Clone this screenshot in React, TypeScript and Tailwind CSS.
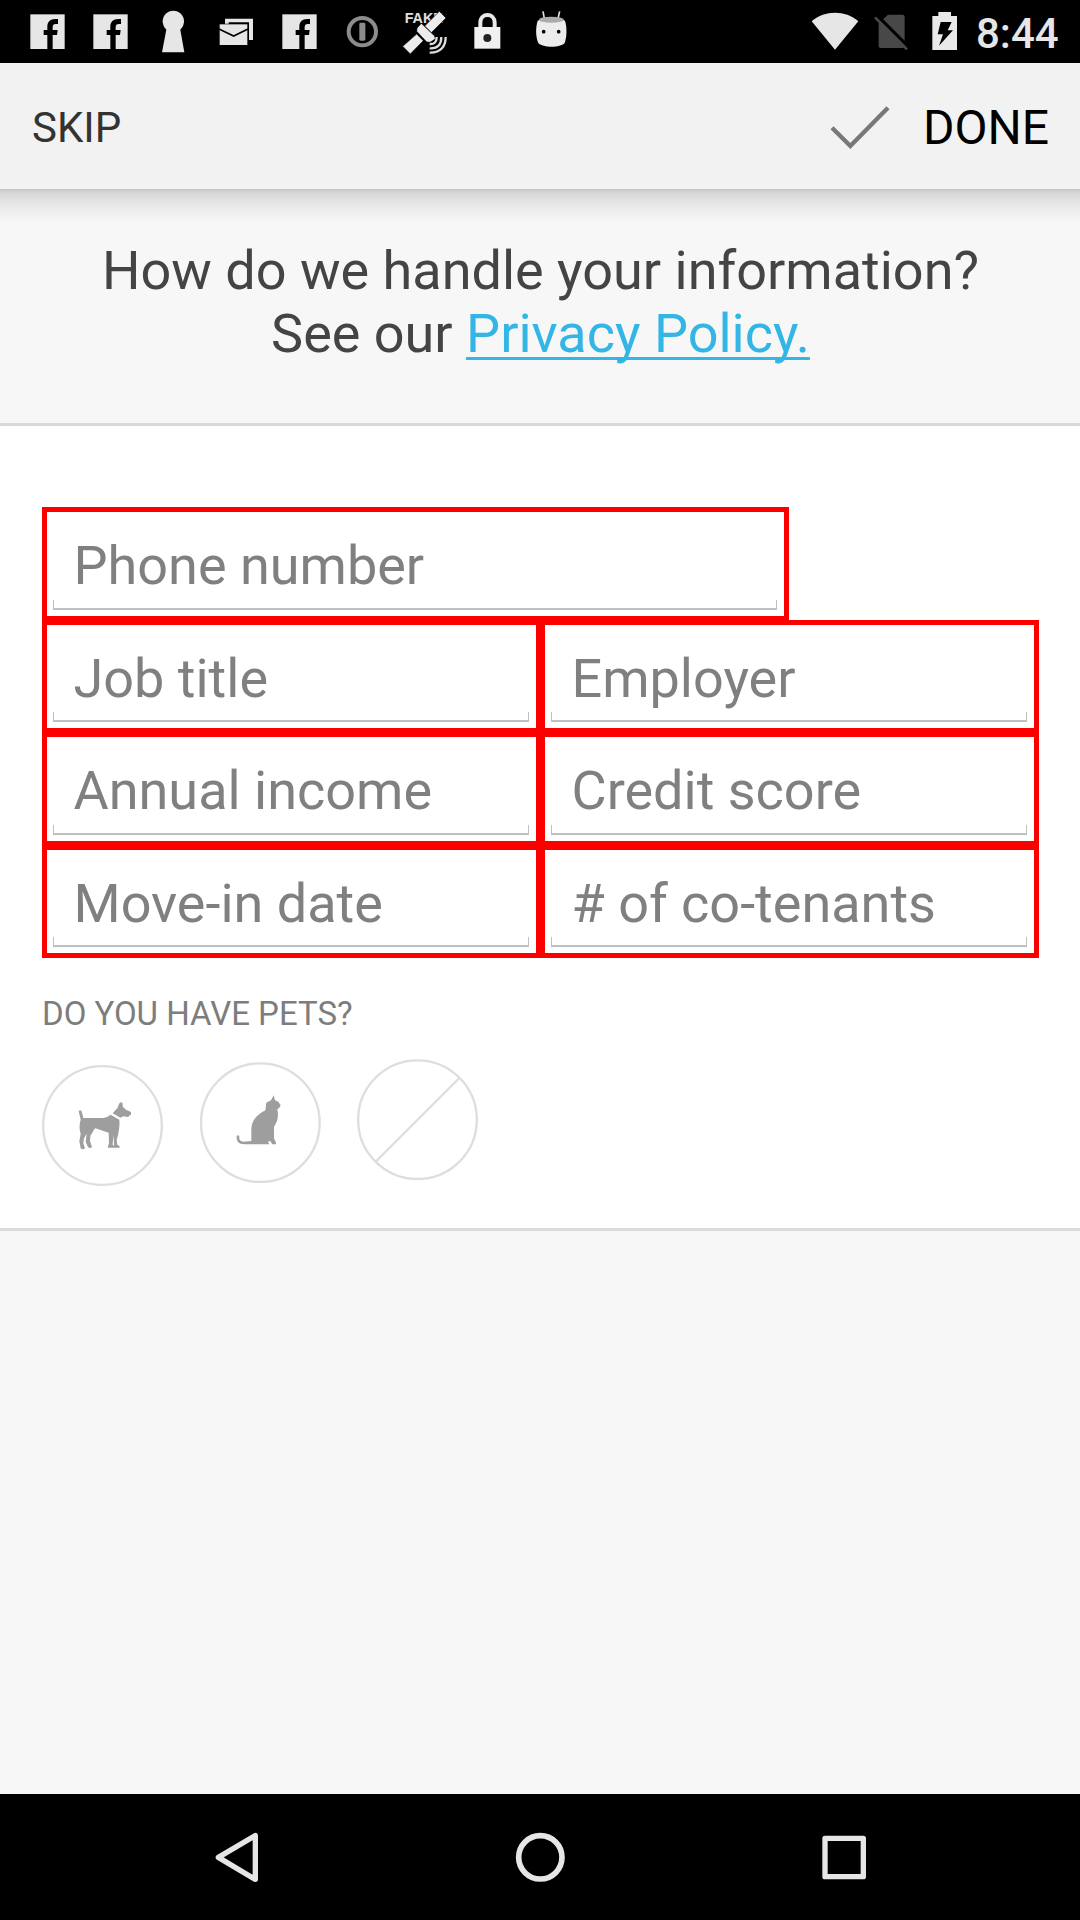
import React from "react";

function FacebookIcon() {
  return (
    <svg className="h-[63px] w-[63px]" viewBox="48 0 189 189">
      <rect x="91" y="43" width="103" height="104" fill="#e6e6e6" />
      <path
        d="M174 57H166C150 57 142 66 142 80V90H131V105H142V147H158V105H171L173 90H158V82C158 75 161 72 167 72H174Z"
        fill="#000"
      />
    </svg>
  );
}

function KeyholeIcon() {
  return (
    <svg className="h-[63px] w-[63px]" viewBox="426 0 189 189">
      <circle cx="520" cy="64" r="32" fill="#e6e6e6" />
      <path d="M500 84H540L553 157H486Z" fill="#e6e6e6" />
    </svg>
  );
}

function MailIcon() {
  return (
    <svg className="h-[63px] w-[63px]" viewBox="615 0 189 189">
      <path d="M675 56H759V120H747V67H686V71H675Z" fill="#e6e6e6" />
      <rect x="659" y="73" width="83" height="62" fill="#e6e6e6" />
      <path d="M657 87L701 108L744 87" fill="none" stroke="#000" strokeWidth="5" />
    </svg>
  );
}

function InfoIcon() {
  return (
    <svg className="h-[63px] w-[63px]" viewBox="33 0 189 189">
      <circle cx="127" cy="95" r="41" fill="none" stroke="#8c8c8c" strokeWidth="12" />
      <rect x="118" y="68" width="18" height="54" rx="4" fill="#8c8c8c" />
    </svg>
  );
}

function SatelliteIcon() {
  return (
    <svg className="h-[63px] w-[63px]" viewBox="222 0 189 189">
      <text x="254" y="69" fill="#e0e0e0" fontFamily="Liberation Sans" fontWeight="700" fontSize="43">
        FAKE
      </text>
      <g fill="#ececec" stroke="#000" strokeWidth="2">
        <path d="M358 34L378 54L334 98L314 78Z" />
        <path d="M290 102L310 122L271 162L248 139Z" />
        <path d="M304 70L344 108L346 117L330 127L320 126L290 94L291 84Z" />
      </g>
      <g fill="none" stroke="#dcdcdc" strokeWidth="7">
        <path d="M329 132C343 133 350 126 350 111" />
        <path d="M329 145C354 147 364 132 364 111" />
        <path d="M329 158C363 159 377 138 377 111" />
      </g>
    </svg>
  );
}

function LockIcon() {
  return (
    <svg className="h-[63px] w-[63px]" viewBox="411 0 189 189">
      <path d="M481 84V68C481 37 524 37 524 68V84" fill="none" stroke="#e9e9e9" strokeWidth="12" />
      <rect x="463" y="81" width="78" height="65" fill="#f0f0f0" />
      <circle cx="502" cy="114" r="12" fill="#222" />
    </svg>
  );
}

function RobotIcon() {
  return (
    <svg className="h-[63px] w-[63px]" viewBox="600 0 189 189">
      <path d="M669 34L673 56M719 34L714 56" stroke="#ddd" strokeWidth="5" />
      <path d="M653 62C670 52 718 52 735 62C741 82 741 108 734 129C720 144 670 144 655 129C646 108 647 82 653 62Z" fill="#ececec" />
      <ellipse cx="694" cy="59" rx="37" ry="9" fill="#ababab" />
      <circle cx="671" cy="95" r="5.5" fill="#000" />
      <circle cx="716" cy="95" r="5.5" fill="#000" />
    </svg>
  );
}

function WifiIcon() {
  return (
    <svg className="h-[63px] w-[56px]" viewBox="84 0 168 189">
      <path d="M165 149L95 64C135 30 195 30 235 64Z" fill="#e6e6e6" />
    </svg>
  );
}

function NoSimIcon() {
  return (
    <svg className="h-[63px] w-[55px]" viewBox="252 0 165 189">
      <path d="M324 44H367Q374 44 374 51V137Q374 144 367 144H304Q296 144 296 137V70Z" fill="#484848" />
      <path d="M291 46L387 142" stroke="#000" strokeWidth="10" />
      <path d="M285 52L381 148" stroke="#484848" strokeWidth="8" />
    </svg>
  );
}

function BatteryIcon() {
  return (
    <svg className="h-[63px] w-[51px]" viewBox="417 0 153 189">
      <path d="M475 36H513V48H531V150H457V48H475Z" fill="#e9e9e9" />
      <path d="M482 66H515L503 91H519L477 137L489 103H473Z" fill="#000" />
    </svg>
  );
}

function DogIcon() {
  return (
    <svg className="h-[121px] w-[121px]" viewBox="66 74 363 363">
      <circle cx="247.5" cy="255.5" r="178" fill="none" stroke="#dedede" strokeWidth="7" />
      <g fill="#9e9e9e">
        <path d="M176 213Q180 206 185 213L190 233H250Q263 231 272 223L298 238C300 257 296 273 294 285L290 298L292 313L299 318V322H283L280 284L278 313L284 318V322H264V317L267 310L266 277L226 264C221 267 218 278 211 287L210 302L216 320Q210 326 204 320L197 305L200 280L192 294L190 309L195 324Q188 330 182 324L178 303L182 281C177 265 178 250 182 238Z" />
        <path d="M303 185L308 189V199L318 208L333 215V222L324 230L310 228L301 232L278 219L293 202L297 190Z" />
      </g>
    </svg>
  );
}

function CatIcon() {
  return (
    <svg className="h-[121px] w-[121px]" viewBox="539 65 363 363">
      <circle cx="720" cy="247" r="178" fill="none" stroke="#dedede" strokeWidth="7" />
      <path
        d="M760 165L764 180L774 184L781 195L777 202L771 207C775 225 773 241 761 259V294L767 307V312H756L749 301L743 305L747 312H672C653 312 648 301 649 287Q653 282 657 288C656 299 659 304 669 304L693 302V266C693 240 711 222 735 210C737 201 736 193 738 187L752 180Z"
        fill="#9e9e9e"
      />
    </svg>
  );
}

function NoneIcon() {
  return (
    <svg className="h-[121px] w-[121px]" viewBox="1011 56 363 363">
      <g fill="none" stroke="#dedede" strokeWidth="7">
        <circle cx="1192.5" cy="238" r="178" />
        <path d="M1068 363L1318 113" />
      </g>
    </svg>
  );
}

function Field({ label, box }: { label: string; box: string }) {
  return (
    <div className={`relative border-[#fc0000] ${box}`}>
      <div className="pt-[22px] pl-[26.5px] text-[54px] leading-[63px] whitespace-nowrap text-[#808080]">{label}</div>
      <div className="absolute right-[7px] bottom-[6px] left-[6px] h-[10px] border-x border-b-2 border-[#bcc2c2]" />
    </div>
  );
}

export default function App() {
  return (
    <div className="flex h-[1920px] w-[1080px] flex-col overflow-hidden bg-[#f7f7f7] font-[Roboto,sans-serif]">
      <div className="flex h-[63px] shrink-0 bg-black pl-[16px]">
        <FacebookIcon />
        <FacebookIcon />
        <KeyholeIcon />
        <MailIcon />
        <FacebookIcon />
        <InfoIcon />
        <SatelliteIcon />
        <LockIcon />
        <RobotIcon />
        <div className="ml-auto flex w-[272px]">
          <WifiIcon />
          <NoSimIcon />
          <BatteryIcon />
          <span className="pt-[9px] pl-[6px] text-[42px] leading-[49px] font-medium text-[#e6e6e6]">8:44</span>
        </div>
      </div>

      <header className="flex h-[126px] shrink-0 items-center bg-[#f2f2f2] pr-[31px] pl-[32px]">
        <span className="pt-[2px] text-[42px] text-[#333]">SKIP</span>
        <svg className="mt-[2px] ml-auto h-[60px] w-[64px]" viewBox="144 51 192 180">
          <path d="M156 143L211 198L324 83" fill="none" stroke="#787878" strokeWidth="13" />
        </svg>
        <span className="ml-[31px] pt-[4px] text-[48px] text-black">DONE</span>
      </header>

      <section className="h-[237px] shrink-0 border-b-3 border-[#d9d9d9] bg-[linear-gradient(to_bottom,#c6c6c6_0px,#d7d7d7_4px,#e3e3e3_12px,#efefef_23px,#f7f7f7_34px)] pt-[50px] pl-px text-center text-[54px] leading-[63px] text-[#444]">
        <p>How do we handle your information?</p>
        <p>
          See our{" "}
          <a className="text-[#33b5e5] underline decoration-3 underline-offset-[5px] [text-decoration-skip-ink:none]">
            Privacy Policy.
          </a>
        </p>
      </section>

      <main className="h-[805px] shrink-0 border-b-3 border-[#dcdcdc] bg-white px-[42px] pt-[81px]">
        <div className="grid w-[997px] grid-cols-[498px_499px] grid-rows-[113px_112px_113px_113px]">
          <div className="col-span-2 grid w-[747px]">
            <Field label="Phone number" box="border-x-5 border-t-5 border-b-4" />
          </div>
          <Field label="Job title" box="border-t-5 border-r-4 border-b-4 border-l-5" />
          <Field label="Employer" box="border-x-5 border-t-5 border-b-4" />
          <Field label="Annual income" box="border-t-5 border-r-4 border-b-4 border-l-5" />
          <Field label="Credit score" box="border-x-5 border-t-5 border-b-4" />
          <Field label="Move-in date" box="border-t-5 border-r-4 border-b-5 border-l-5" />
          <Field label="# of co-tenants" box="border-5" />
        </div>
        <h2 className="mt-[36px] text-[33px] leading-[39px] text-[#7d7d7d]">DO YOU HAVE PETS?</h2>
        <div className="mt-[26px] flex gap-[36.5px]">
          <div className="pt-[6px]"><DogIcon /></div>
          <div className="pt-[3px]"><CatIcon /></div>
          <NoneIcon />
        </div>
      </main>

      <nav className="mt-auto flex h-[126px] shrink-0 bg-black px-[86px]">
        <svg className="h-[126px] w-[302px]" viewBox="-282 42 906 378">
          <path d="M115 232L226 167V298Z" fill="none" stroke="#e6e6e6" strokeWidth="16" strokeLinejoin="round" />
        </svg>
        <svg className="h-[126px] w-[304px]" viewBox="624 42 912 378">
          <circle cx="1081" cy="232" r="65" fill="none" stroke="#e6e6e6" strokeWidth="17" />
        </svg>
        <svg className="h-[126px] w-[302px]" viewBox="576 42 906 378">
          <rect x="975" y="175" width="115" height="115" fill="none" stroke="#e6e6e6" strokeWidth="16" strokeLinejoin="round" />
        </svg>
      </nav>
    </div>
  );
}
